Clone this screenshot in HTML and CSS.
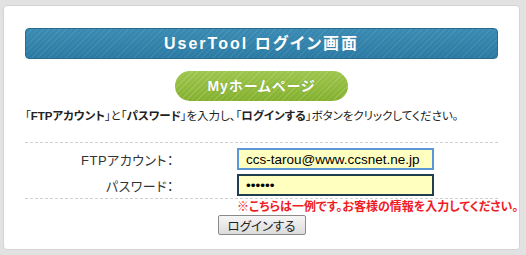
FILE: index.html
```html
<!DOCTYPE html>
<html lang="ja">
<head>
  <meta charset="UTF-8">
  <title>UserTool ログイン画面</title>
  <link rel="stylesheet" href="styles.css">
</head>
<body>

  <div class="panel">
    <h1 class="title">UserTool ログイン画面</h1>

    <div class="home">
      <a class="home-btn" href="#">Myホームページ</a>
    </div>

    <p class="lead">「<b>FTPアカウント</b>」と「<b>パスワード</b>」を入力し、「<b>ログインする</b>」ボタンをクリックしてください。</p>

    <!-- login form -->
    <form class="login">
      <div class="fields">
        <label for="account">FTPアカウント：</label>
        <input type="text" id="account" class="focus" value="ccs-tarou@www.ccsnet.ne.jp">

        <label for="password">パスワード：</label>
        <input type="password" id="password" value="123456">
      </div>
      <p class="note">※こちらは一例です。お客様の情報を入力してください。</p>
      <div class="submit">
        <button type="button">ログインする</button>
      </div>
    </form>
  </div>

</body>
</html>
```

FILE: styles.css
```css
* {
  box-sizing: border-box;
  margin: 0;
  padding: 0;
}
body {
  font-family: "Liberation Sans", "Noto Sans CJK JP", sans-serif;
  font-feature-settings: "palt";
  background-color: #e2e2e2;
  padding: 5px 6px 5px 3px;
  height: 255px;
  overflow: hidden;
}
.panel {
  background-color: #fff;
  border: 1px solid #d4d4d4;
  border-radius: 4px;
  height: 245px;
  padding: 22px 21px 0 21px;
}
.title {
  height: 31px;
  border: 1px solid #2a6b8e;
  border-radius: 4px;
  background:
    repeating-linear-gradient(135deg, rgba(255,255,255,0.08) 0 1px, transparent 1px 4px),
    linear-gradient(#3a8bb3, #2b7aa3);
  color: #fff;
  font-size: 16px;
  font-weight: bold;
  letter-spacing: 2px;
  text-align: center;
  line-height: 29px;
}
.home {
  display: flex;
  justify-content: center;
  margin-top: 12px;
}
.home-btn {
  display: block;
  width: 173px;
  height: 30px;
  border-radius: 15px;
  background:
    repeating-linear-gradient(135deg, rgba(255,255,255,0.14) 0 1px, transparent 1px 4px),
    linear-gradient(#9cc64c, #84b02e);
  color: #fff;
  font-size: 14px;
  font-weight: bold;
  letter-spacing: 1px;
  text-align: center;
  line-height: 30px;
  text-decoration: none;
  text-shadow: 0 0 1px rgba(0,0,0,0.2);
}
.lead {
  margin-top: 8px;
  font-size: 11.5px;
  line-height: 15px;
  color: #222;
  white-space: nowrap;
}
.lead b {
  color: #222;
}
.login {
  margin-top: 18px;
}
.fields {
  display: grid;
  grid-template-columns: 149px 197px;
  column-gap: 63px;
  row-gap: 4px;
  align-items: center;
  border-top: 1px dashed #cfcfcf;
  border-bottom: 1px dashed #cfcfcf;
  padding: 5px 0 2px;
}
.fields label {
  text-align: right;
  font-size: 13px;
  color: #333;
  letter-spacing: 0.5px;
}
.fields input {
  height: 22px;
  border: 2px solid #1f3f4f;
  background-color: #ffffc0;
  font-family: "Liberation Sans", sans-serif;
  font-size: 13.5px;
  padding: 0 7px;
  outline: none;
}
.fields input.focus {
  border: 2px solid #5a96d8;
  padding-left: 7px;
}
.note {
  margin-left: 212px;
  margin-top: 1px;
  font-size: 12px;
  line-height: 15px;
  font-weight: bold;
  color: #ee1c25;
  white-space: nowrap;
}
.submit {
  display: flex;
  justify-content: center;
  margin-top: 0;
}
.submit button {
  width: 88px;
  height: 20px;
  border: 1px solid #8a8a8a;
  border-radius: 2px;
  background: linear-gradient(#f6f6f6, #dcdcdc);
  font-family: "Liberation Sans", "Noto Sans CJK JP", sans-serif;
  font-feature-settings: "palt";
  font-size: 12.5px;
  color: #222;
}
```
